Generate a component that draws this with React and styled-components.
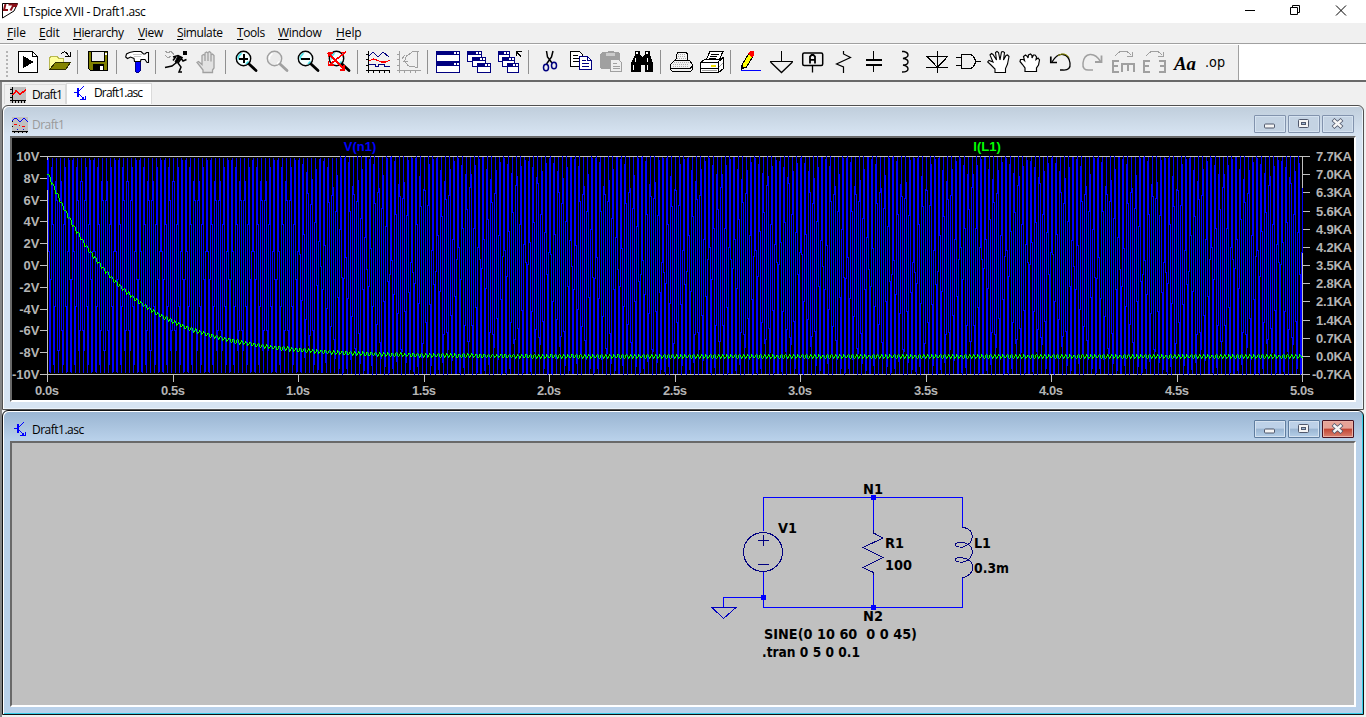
import React from "react";
import styled, { createGlobalStyle } from "styled-components";

const GlobalStyle = createGlobalStyle`
  * { box-sizing: border-box; }
  body { margin: 0; background: #f0f0f0; font-family: "Open Sans", sans-serif; overflow: hidden; }
`;

const Frame = styled.div`
  width: 1366px;
  height: 717px;
  display: flex;
  flex-direction: column;
  background: #f0f0f0;
`;
const TitleBar = styled.header`
  height: 23px;
  display: flex;
  align-items: center;
  background: #fff;
`;
const AppTitle = styled.span`
  flex: 1;
  margin-left: 3px;
  font-size: 12px;
  letter-spacing: -0.39px;
  line-height: 22px;
  white-space: pre;
`;
const Caption = styled.svg`
  width: 138px;
  height: 23px;
`;
const MenuBar = styled.nav`
  height: 20px;
  display: flex;
  padding-left: 7px;
  background: #f0f0f0;
`;
const MenuItem = styled.span`
  width: ${(p) => p.$w}px;
  font-size: 12px;
  letter-spacing: ${(p) => p.$ls ?? -0.4}px;
  line-height: 20px;
  white-space: nowrap;
  u { text-underline-offset: 2px; }
`;
const ToolStrip = styled.div`
  height: 39px;
  border-top: 1px solid #a0a0a0;
  border-bottom: 2px solid #696969;
  background: #fff;
  padding-top: 1px;
`;
const ToolBar = styled.div`
  width: 1239px;
  height: 35px;
  display: flex;
  align-items: flex-start;
  padding: 5px 0 0 6px;
  background: #f0f0f0;
  border-right: 1px solid #a0a0a0;
`;
const Grip = styled.i`
  width: 6px;
  height: 27px;
  background: radial-gradient(circle, #b4b4b4 1px, transparent 1.3px) -1px 0 / 4px 4px repeat-y;
`;
const ToolButton = styled.span`
  width: 31px;
  height: 26px;
  padding-left: 4px;
  flex: none;
  svg { display: block; width: 24px; height: 24px; overflow: visible; }
`;
const Separator = styled.i`
  width: 8px;
  height: 24px;
  flex: none;
  padding-left: 3px;
  &::before { content: ""; display: block; width: 1px; height: 24px; background: #909090; }
`;
const TabBar = styled.div`
  height: 23px;
  display: flex;
  align-items: flex-end;
  border-left: 2px solid #858585;
  padding-left: 2px;
`;
const Tab = styled.div`
  display: flex;
  align-items: center;
  gap: ${(p) => (p.$active ? 8 : 6)}px;
  height: ${(p) => (p.$active ? 21 : 20)}px;
  width: ${(p) => (p.$active ? 86 : 62)}px;
  margin-bottom: 1px;
  padding: 0 0 ${(p) => (p.$active ? 2 : 0)}px ${(p) => (p.$active ? 7 : 5)}px;
  border: 1px solid #dadada;
  border-bottom: 0;
  background: ${(p) => (p.$active ? "#fff" : "#f0f0f0")};
  font-size: 12px;
  letter-spacing: ${(p) => (p.$active ? -0.85 : -0.9)}px;
  line-height: 18px;
  svg { flex: none; }
`;
const Workspace = styled.main`
  width: 1366px;
  flex: 1;
  border-left: 2px solid #858585;
  background: #f0f0f0;
`;
const ChildWindow = styled.section`
  width: 1362px;
  height: ${(p) => p.$h}px;
  display: flex;
  flex-direction: column;
  padding: 0 7px 6px 7px;
  border: 1px solid ${(p) => (p.$active ? "#101010" : "#505050")};
  border-radius: 6px 6px 0 0;
  background: ${(p) =>
    p.$active
      ? "linear-gradient(#99b4d1, #b9d1ea 29px)"
      : "linear-gradient(#bfcddb, #d7e4f2 29px)"};
  box-shadow: inset 1px 1px 0 #fff, inset -1px -1px 0 ${(p) => (p.$active ? "#35cde8" : "#eaf2fa")};
`;
const ChildTitle = styled.div`
  height: 30px;
  flex: none;
  display: flex;
  align-items: center;
  padding: 7px 2px 0 2px;
  gap: 4px;
  font-size: 12px;
  line-height: 20px;
  letter-spacing: -0.5px;
  color: ${(p) => (p.$active ? "#000" : "#9a9a9a")};
  span { flex: 1; }
`;
const Buttons = styled.div`
  display: flex;
  gap: 2px;
  margin-top: -1px;
`;
const WinButton = styled.div`
  width: 32px;
  height: 18px;
  border: 1px solid ${(p) => (p.$danger ? "#4a1321" : p.$active ? "#5f7d9f" : "#8293ad")};
  border-radius: 1px;
  background: ${(p) =>
    p.$danger
      ? "linear-gradient(#e6a397 0 45%, #c24432 50%, #d9806f)"
      : p.$active
        ? "linear-gradient(#bdd1e8 0 45%, #9ab5d2 50%, #b5cfe8)"
        : "#c4d3e3"};
  box-shadow: inset 0 0 0 1px ${(p) => (p.$danger ? "#eab0a5" : "#d5e2f0")};
  svg { display: block; }
`;
const Client = styled.div`
  width: 1346px;
  height: ${(p) => p.$h}px;
  flex: none;
  border: 2px solid;
  border-color: #696969 #fff #fff #696969;
  background: ${(p) => p.$bg};
  svg { display: block; }
`;

/* ---------- toolbar icons, drawn on a 24 x 24 pixel grid ---------- */
const NAVY = "#000080";
const GREY = "#a0a0a0";
const K = "#000";

const Glass = ({ c = K, shine = "#40e0e8" }) => (
  <g shapeRendering="auto">
    <circle cx="9.5" cy="8.5" r="7.2" fill={c === K ? "#f4ffff" : "#ececec"} stroke={c} strokeWidth="1.4" />
    <path d="M4.500 9.500V6.500l3-3.300M12 14l2.500-2.500" stroke={shine} strokeWidth="1.600" fill="none" />
    <path d="M15 14l7 6.500" stroke={c} strokeWidth="2.8" strokeLinecap="round" />
  </g>
);
const Win = ({ x, y, w, h }) => (
  <>
    <path d={`M${x + 0.5} ${y + 0.5}h${w - 1}v${h - 1}h${1 - w}z`} fill="#fff" stroke={NAVY} />
    <path d={`M${x} ${y}h${w}v4h${-w}z`} fill={NAVY} />
    <path d={`M${x + w - 6} ${y + 1}h2v2h-2zM${x + w - 3} ${y + 1}h2v2h-2z`} fill="#fff" />
  </>
);

const icons = {
  run: (
    <>
      <path d="M2.500 1.500h14l5 5v16h-19z" fill="#fff" stroke={K} />
      <path d="M16.500 1.500v5h5" fill="none" stroke={K} />
      <path d="M7 6l11 6-11 6z" fill={K} />
    </>
  ),
  open: (
    <>
      <path d="M2.500 19V8l2-2h5l2 2h5v4" fill="#ffff9c" stroke="#b8b850" />
      <path d="M2.500 19.500l6-7h15l-5 7z" fill="#848400" stroke="#303000" />
      <path d="M14 4q4-5 7 1v1M18 6.500h5.500V2" fill="none" stroke={K} />
    </>
  ),
  save: (
    <>
      <path d="M2.500 1.500h19v19h-17l-2-2z" fill="#808000" stroke={K} />
      <path d="M5.500 1.500h13v10h-13z" fill="#efefef" stroke={K} />
      <path d="M7 14h11v7H7z" fill={K} />
      <path d="M14 16h3v4h-3z" fill="#fff" />
      <path d="M19 3h2v2h-2z" fill="#fff" />
    </>
  ),
  hammer: (
    <>
      <path d="M10 11h5v10l-1 1h-3l-1-1z" fill="#0000ff" stroke={NAVY} />
      <path
        d="M.7 7L1.500 4 4.500 2.500 9 1.500H16L18.500 4H20L21.500 2.500H23.500V12.500H22L20 9.500H16L15.500 11.500H9.500L9 8.500 5.500 7 2.500 8.500Z"
        fill="#fff" stroke={K} strokeWidth="1.100" shapeRendering="auto"
      />
      <path d="M8 4.500h9M9 6.500h7" stroke="#c8c8c8" />
    </>
  ),
  runner: (
    <>
      <path d="M18.500 1h4v4h-4z" fill={K} />
      <g shapeRendering="auto">
        <path d="M9 7l5-1.500 4 2-4 5.500 3 4-2 5h3M12.500 12.500L8 16l-7 1.500M12 6.500l-3 4M17 8l2 3 3.500-1.500" fill="none" stroke={K} strokeWidth="1.500" />
        <path d="M14 6l3 1-4 6-2-1z" fill={K} stroke={K} />
      </g>
      <path d="M1 1.500l3 1 3-1 3 3M1 5.500l3 2 3-1" stroke={GREY} fill="none" />
    </>
  ),
  halt: (
    <path
      d="M8 22.500V20L4.500 15.500 2 12.500 3.500 11.500 7 14.500V5.500L8.500 4.500 10 5.500V11 3L11.500 2 13 3V11 2.500L14.500 1.500 16 3V11.500 5L17.500 4 19 5.500V18L17.500 20V22.500Z"
      fill="#e2e2e2" stroke={GREY} strokeWidth="1.300" shapeRendering="auto"
    />
  ),
  zoomIn: (
    <>
      <Glass />
      <path d="M5 8.500h9M9.500 4v9" stroke={K} strokeWidth="2" />
    </>
  ),
  pan: <Glass c={GREY} shine="#fff" />,
  zoomOut: (
    <>
      <Glass />
      <path d="M5 8.500h9" stroke={K} strokeWidth="2" />
    </>
  ),
  zoomFit: (
    <>
      <Glass />
      <path d="M1 3l16 16M19 2L2 15M1.500 7V3H6M14 2.500h5M1.500 11v4h5M13 20h4v-5" stroke="#f00" strokeWidth="1.600" fill="none" />
    </>
  ),
  plot: (
    <>
      <path d="M2.500 1v22M0 20.500h24M0 4.500h2M0 9.500h2M0 15.500h2M7.500 20v3M13.500 20v3M18.500 20v3M23.500 20v3" stroke={K} fill="none" />
      <path d="M3 6l4-4 5 5 5-5 6 5" stroke={NAVY} fill="none" />
      <path d="M3 11l4-2 4 1 4 2h5l4-2" stroke="#f00" fill="none" strokeWidth="1.3" />
      <path d="M3 14.500h6v2h3v-2h6v2h6" stroke={NAVY} fill="none" />
    </>
  ),
  polar: (
    <>
      <path d="M2.500 1v22M0 20.500h24M0 4.500h2M0 9.500h2M0 15.500h2M7.500 20v3M13.500 20v3M18.500 20v3" stroke={GREY} fill="none" />
      <path d="M22 1.500h-6L9.500 6l-2 5 4 5 10 1.500M20.500 1v17M5 9l3-4M6 11.500h5" stroke={GREY} fill="none" />
    </>
  ),
  tile: (
    <>
      <Win x={0} y={1} w={24} h={11} />
      <Win x={0} y={12} w={24} h={11} />
    </>
  ),
  cascade: (
    <>
      <Win x={0} y={1} w={15} h={11} />
      <Win x={5} y={7} w={14} h={10} />
      <Win x={10} y={13} w={14} h={10} />
    </>
  ),
  cascadeUp: (
    <>
      <Win x={0} y={1} w={12} h={11} />
      <Win x={4} y={7} w={13} h={10} />
      <Win x={9} y={13} w={12} h={10} />
      <path d="M18.500 6V1.500H24M19 2l4 5" stroke={K} fill="none" strokeWidth="1.3" />
    </>
  ),
  cut: (
    <g shapeRendering="auto">
      <path d="M9.500 1l1 6 4.500 6M16 1l-1.500 6-5 7" stroke={K} strokeWidth="1.5" fill="none" />
      <ellipse cx="9" cy="17.500" rx="2.500" ry="3.300" stroke={NAVY} strokeWidth="1.500" fill="none" />
      <ellipse cx="17" cy="15.500" rx="2.500" ry="3.300" stroke={NAVY} strokeWidth="1.500" fill="none" />
    </g>
  ),
  copy: (
    <>
      <path d="M2.500 1.500h9l3 3v12h-12z" fill="#fff" stroke={K} />
      <path d="M5 5.500h5M5 8.500h6M5 11.500h6" stroke={K} />
      <path d="M11.500 6.500h8l4 4v9h-12z" fill="#fff" stroke={NAVY} />
      <path d="M19.500 6.500v4h4M14 10.500h4M14 13.500h7M14 16.500h7" stroke={NAVY} fill="none" />
    </>
  ),
  paste: (
    <>
      <path d="M1 4l2-2h5l1-1h5l1 1h5l1 2v15H2l-1-1z" fill={GREY} />
      <path d="M7 3h9v3H7z" fill="#ccc" />
      <path d="M11.500 9.500h8l3 3v9h-11z" fill="#eee" stroke={GREY} />
      <path d="M14 13.500h4M14 16.500h7M14 18.500h7" stroke={GREY} />
    </>
  ),
  find: (
    <>
      <path d="M5 1h5v3l2 3h1l2-3V1h5v4l3 8v9h-8v-7h-4v7H1v-9l4-8z" fill={K} />
      <path d="M6 2h2v2H6zM16 2h2v2h-2zM5 8h1v4H5zM17 8h1v4h-1zM3 15h1v5H3zM17 15h1v5h-1z" fill="#fff" />
    </>
  ),
  print: (
    <>
      <path d="M6.500 11l2-9h8l2 2v7" fill="#f5f5f5" stroke={K} />
      <path d="M1.500 14.500l4-4h15l3 4v5l-2 2h-18l-2-2z" fill="#f2f2f2" stroke={K} />
      <path d="M9 4.500h7M9 6.500h8M8 8.500h9M5 12.500h15M4 14.500h16M4 16.500h16" stroke="#b0b0b0" strokeDasharray="1 1" />
      <path d="M2 18.500h19l2-2" stroke={K} fill="none" />
    </>
  ),
  printSetup: (
    <>
      <path d="M6 10l4-8.500h13l-4 8.500" fill="#fff" stroke={K} />
      <path d="M11 4.500h8M10 6.500h7M9 8.500h7" stroke={K} />
      <path d="M.5 12.500l4-3h15l4-2v11l-5 4h-18z" fill="#fff" stroke={K} />
      <path d="M0 12.500h18.500v10M18 12l5-4M0 18.500h18" stroke={K} fill="none" />
      <path d="M11 15h5v1.500h-5z" fill="#f0e000" />
      <path d="M2 20.500h15M19 17l4-4" stroke={GREY} />
    </>
  ),
  pencil: (
    <>
      <path d="M2.500 19l1-5 6-10 4 3-6 10z" fill="#ff0" stroke={K} />
      <path d="M9 4l2-3h4v4l-2 2z" fill="#f00" />
      <path d="M2 20v-5l3 3z" fill={K} />
      <path d="M2 20.500h20" stroke="#00f" />
    </>
  ),
  ground: (
    <>
      <path d="M11.500 1v10M0 11.500h23" stroke={K} strokeWidth="1.200" />
      <path d="M.5 12l11 10.500 11-10.500" fill="none" stroke={K} strokeWidth="1.300" shapeRendering="auto" />
    </>
  ),
  label: (
    <g shapeRendering="auto">
      <rect x="1.700" y="3" width="20" height="12.500" rx="1.500" stroke={K} strokeWidth="1.500" />
      <path d="M9 13.500V6.500l1.500-1.500h2l1.500 1.500v7M9 9.800h5" stroke={K} strokeWidth="1.800" fill="none" />
      <path d="M11.500 16v6.500" stroke={K} strokeWidth="1.300" />
    </g>
  ),
  resistor: <path d="M11.500 1v3l7 3.500-14 6.500 7 3v6" fill="none" stroke={K} strokeWidth="1.200" shapeRendering="auto" />,
  capacitor: (
    <>
      <path d="M10.500 1v8M10.500 14v8" stroke={K} />
      <path d="M3 10h16M3 15h16" stroke={K} strokeWidth="2" />
    </>
  ),
  inductor: <path d="M8 1.500h2Q14 2.500 14 5T9 8.500Q14 9 14 12T9 15Q14 16 14 19T8 22" fill="none" stroke={K} strokeWidth="1.400" shapeRendering="auto" />,
  diode: <path d="M12.500 1v22M1 6.500h22M1 17.500h22M2.500 7l10 10.500 9.500-10.500" fill="none" stroke={K} strokeWidth="1.200" />,
  gate: <path d="M5.500 4.500h9q4 1 5 7-1 6-5 7h-9zM0 7.500h5M0 15.500h5M19.500 11.500h5" fill="none" stroke={K} strokeWidth="1.200" />,
  move: (
    <path
      d="M8 22.500V19L4 15 .7 12 2 10.500 6 12 3 5 4.500 3.500 6 4.500 9.500 10 8.500 2.500 10 1.500 11.500 2.500 13 10 14.500 2 16 1.500 17.500 2.500 16.500 10 19 5.500 20.500 5 22 6.500 20.500 14 18.500 18.500V22.500Z"
      fill="#fff" stroke={K} strokeWidth="1.100" shapeRendering="auto"
    />
  ),
  drag: (
    <path
      d="M7 21.500V18L4.500 14.500 2 11.500 2.500 9.500H5.500L6.500 10.500 5.500 6.500 7.500 5 9.500 6.500 10 8 10.500 5 12.500 4 14 5.500V8L15.500 5 17 5 18.500 7 18 9.500 20 8 21.500 10 20.500 15 18.500 18V21.500Z"
      fill="#fff" stroke={K} strokeWidth="1.200" shapeRendering="auto"
    />
  ),
  undo: (
    <g shapeRendering="auto">
      <path d="M3 12Q8 3.500 14 4.500T21 13 14 20H11" fill="none" stroke={K} strokeWidth="1.300" />
      <path d="M9 5.500q7-4 11 2" stroke="#909000" fill="none" />
      <path d="M1.800 6.500v6H8" stroke={K} strokeWidth="1.700" fill="none" />
    </g>
  ),
  redo: (
    <g shapeRendering="auto">
      <path d="M20.500 11.500Q16 4 10 4.500T3 13t7 7h3" fill="none" stroke={GREY} strokeWidth="1.500" />
      <path d="M21.500 5.500v6.500H15" stroke={GREY} strokeWidth="1.800" fill="none" />
    </g>
  ),
  rotate: (
    <>
      <path d="M4 6l5-4.500h7l4 3M16 6.500h5V2" stroke={GREY} fill="none" />
      <path d="M8 11H2v11h6M2 16h5M11 22v-8M10 14h14M17 14v7M23 14v8" stroke={GREY} strokeWidth="2" fill="none" />
    </>
  ),
  mirror: (
    <>
      <path d="M4 6l5-4.500h7l4 3M16 6.500h5V2" stroke={GREY} fill="none" />
      <path d="M8 11H2v11h6M2 16h5M17 11h6v11h-6M18 16h5" stroke={GREY} strokeWidth="2" fill="none" />
    </>
  ),
  text: (
    <text x="1" y="19.500" fontFamily="Liberation Serif, serif" fontSize="19" fontWeight="bold" fontStyle="italic" textLength="22" lengthAdjust="spacingAndGlyphs">Aa</text>
  ),
  op: (
    <text x="1" y="16.500" fontFamily="DejaVu Sans, sans-serif" fontSize="14.500" textLength="20" lengthAdjust="spacingAndGlyphs">.op</text>
  ),
};
const groups = [
  ["run", "open"],
  ["save"],
  ["hammer"],
  ["runner", "halt"],
  ["zoomIn", "pan", "zoomOut", "zoomFit"],
  ["plot", "polar"],
  ["tile", "cascade", "cascadeUp"],
  ["cut", "copy", "paste", "find"],
  ["print", "printSetup"],
  ["pencil", "ground", "label", "resistor", "capacitor", "inductor", "diode", "gate", "move", "drag", "undo", "redo", "rotate", "mirror", "text", "op"],
];
const lettered = new Set(["text", "op"]);

const PlotIcon = () => (
  <svg width="16" height="16" shapeRendering="crispEdges">
    <path d="M0 0h16v16H0z" fill="#c0c0c0" />
    <path d="M2.500 0v16M0 13.500h16M0 2.500h2M0 6.500h2M0 10.500h2M5.500 14v2M8.500 14v2M11.500 14v2M14.500 14v2" stroke={K} />
    <path d="M3 8l3-4 4 3 6-4" stroke="#f00" strokeWidth="1.600" fill="none" />
  </svg>
);
const TransistorIcon = () => (
  <svg width="12" height="17" shapeRendering="crispEdges">
    <path d="M0 7.500h4M10 1L5 6M5 9l6 6M6 14.500h5V11" stroke="#00f" fill="none" />
    <path d="M3 3h2v9H3zM8 12h2v2H8z" fill="#00f" />
  </svg>
);
const WaveIcon = () => (
  <svg width="16" height="16" shapeRendering="crispEdges">
    <path d="M0 0h16v16H0z" fill="#c0c0c0" />
    <path d="M0 4l2-2 2-1 4 4 4-4 4 4" stroke="#00f" fill="none" />
    <path d="M2 7.500h3M7 8.500h1M10 9.500h3" stroke="#f00" />
    <path d="M5 12h1v1H5zM11 12h1v1h-1z" fill="#00f" />
    <path d="M0 14.500h16M0 4.500h1M0 9.500h1M2 15.500h1M6 15.500h1M10 15.500h1M14 15.500h1" stroke={K} />
  </svg>
);

/* ---------- waveform plot ---------- */
const X0 = 35;
const PX_PER_S = 251;
const OY = 138;
const yVolt = (v) => 265 - OY - v * 10.88;
const yAmp = (a) => 356 - OY - a * 25.97;

// Joins samples pixel by pixel: each column keeps the vertical span the line crosses.
function columns(fn, stepOf) {
  const cols = new Map();
  const add = (x, a, b) => {
    const c = cols.get(x);
    const lo = Math.min(a, b);
    const hi = Math.max(a, b);
    if (c) {
      c[0] = Math.min(c[0], lo);
      c[1] = Math.max(c[1], hi);
    } else cols.set(x, [lo, hi]);
  };
  let t = 0;
  let px = X0;
  let py = Math.round(fn(0));
  while (t < 5) {
    t = Math.min(5, t + stepOf(t));
    const x = Math.round(X0 + t * PX_PER_S);
    const y = Math.round(fn(t));
    if (x === px) add(x, py, y);
    else {
      const m = Math.round((py + y) / 2);
      add(px, py, m);
      add(x, m, y);
    }
    px = x;
    py = y;
  }
  return [...cols].map(([x, [a, b]]) => `M${x} ${a}h1v${b - a + 1}h-1z`).join("");
}
const W = 2 * Math.PI * 60;
const voltPath = columns(
  (t) => yVolt((t < 1.16 ? 9.88 : 10) * Math.sin(W * (t + 0.006) + Math.PI / 4 - W * 0.006)),
  (t) => (t < 1 ? 1 / 1440 : 1 / 1423)
);

// The current is drawn as one thin pixel trace with a small ripple.
function trace(fn) {
  let d = "";
  let prev = Math.round(fn(0));
  for (let x = X0; x <= X0 + 5 * PX_PER_S; x++) {
    const y = Math.round(fn((x - X0) / PX_PER_S));
    const top = y > prev + 1 ? prev + 1 : y;
    const bottom = y < prev - 1 ? prev - 1 : y;
    d += `M${x} ${top}h1v${bottom - top + 1}h-1z`;
    prev = y;
  }
  return d;
}
const ampPath = trace((t) => yAmp(7.07 * Math.exp(-t / 0.3) + 0.075 * Math.sin(W * t - Math.PI / 4)));

const voltLabels = ["10V", "8V", "6V", "4V", "2V", "0V", "-2V", "-4V", "-6V", "-8V", "-10V"];
const ampLabels = ["7.7KA", "7.0KA", "6.3KA", "5.6KA", "4.9KA", "4.2KA", "3.5KA", "2.8KA", "2.1KA", "1.4KA", "0.7KA", "0.0KA", "-0.7KA"];
const timeLabels = ["0.0s", "0.5s", "1.0s", "1.5s", "2.0s", "2.5s", "3.0s", "3.5s", "4.0s", "4.5s", "5.0s"];

const AxisText = styled.text`
  font: bold 13px "Liberation Sans", sans-serif;
  fill: ${(p) => p.$c || "#b4b4b4"};
`;

const Plot = () => (
  <svg width="1342" height="262" shapeRendering="crispEdges">
    <path d="M28 18h1270v1H28zM28 236h1270v1H28zM35 18h1v226h-1zM1290 18h1v226h-1z" fill="#c0c0c0" />
    {voltLabels.map((l, i) => {
      const y = Math.round(18 + i * 21.8);
      return (
        <g key={l}>
          <path d={`M28 ${y}h7v1h-7z`} fill="#c0c0c0" />
          <AxisText x="27.500" y={y + 5} textAnchor="end">{l}</AxisText>
        </g>
      );
    })}
    {ampLabels.map((l, i) => {
      const y = Math.round(18 + i * 18.17);
      return (
        <g key={l}>
          <path d={`M1291 ${y}h7v1h-7z`} fill="#c0c0c0" />
          <AxisText x="1340" y={y + 5} textAnchor="end" textLength={l.length > 5 ? 40 : 36}>{l}</AxisText>
        </g>
      );
    })}
    {timeLabels.map((l, i) => {
      const x = Math.round(X0 + i * 125.5);
      return (
        <g key={l}>
          <path d={`M${x} 237h1v7h-1z`} fill="#c0c0c0" />
          <AxisText x={x} y="257" textAnchor="middle" textLength="24">{l}</AxisText>
        </g>
      );
    })}
    <path d={voltPath} fill="#00f" />
    <path d={ampPath} fill="#0f0" />
    <AxisText x="348" y="13" $c="#00f" textAnchor="middle">V(n1)</AxisText>
    <AxisText x="975" y="13" $c="#0f0" textAnchor="middle">I(L1)</AxisText>
  </svg>
);

/* ---------- schematic ---------- */
const Label = styled.text`
  font: bold 14px "DejaVu Sans Condensed", "DejaVu Sans", sans-serif;
  font-stretch: condensed;
  white-space: pre;
  fill: #000;
`;
const labels = [
  [863, 494, 20, "N1"], [863, 621, 20, "N2"], [778, 533, 19, "V1"], [885, 548, 19, "R1"],
  [885, 570, 27, "100"], [974, 548, 17, "L1"], [974, 573, 35, "0.3m"],
  [764, 639, 153, "SINE(0 10 60\u00a0 0 0 45)"], [762, 657, 98, ".tran 0 5 0 0.1"],
];
const Schematic = () => (
  <svg width="1342" height="262" viewBox="12 443 1342 262">
    <g fill="none" shapeRendering="crispEdges">
      <path d="M763.500 531V497.500H962.500V527M873.500 497V530M873.500 573V607M763.500 572V607.500H962.500V578M763.500 597.500H723.500V607" stroke="#0000ff" />
      <path d="M712 607.500h24l-12.500 11z" stroke="#0000c0" />
      <path d="M873.500 530V533l9.500 5-20 9.500 20 10-20 10 10.500 5v2M763.500 535v11M758 540.500h11M758 564.500h11" stroke={NAVY} />
      <circle cx="763" cy="552" r="19.500" stroke={NAVY} />
      <path d="M962.500 527C976 530 975 543 963 547C952 548 953 541 963 542.500C976 545 975 559 963 562C952 563 953 556 963 558C976 560 976 574 962.500 578" stroke={NAVY} />
    </g>
    <path d="M871 495h5v5h-5zM871 605h5v5h-5zM761 595h5v5h-5z" fill="#00f" />
    {labels.map(([x, y, w, s]) => (
      <Label key={s} x={x} y={y} textLength={w} lengthAdjust="spacingAndGlyphs">{s}</Label>
    ))}
  </svg>
);

const WindowButtons = ({ active }) => (
  <Buttons>
    <WinButton $active={active}>
      <svg width="30" height="16"><rect x="9.500" y="8" width="10" height="4" rx="1" fill="#f4f4f4" stroke="#50586c" /></svg>
    </WinButton>
    <WinButton $active={active}>
      <svg width="30" height="16">
        <rect x="9.500" y="3.500" width="10" height="8" rx="1" fill="#f4f4f4" stroke="#50586c" />
        <rect x="12.500" y="6.500" width="4" height="2" fill="#9cb5d1" stroke="#50586c" />
      </svg>
    </WinButton>
    <WinButton $active={active} $danger={active}>
      <svg width="30" height="16">
        <path d="M10 3.500l9 8M19 3.500l-9 8" stroke="#50586c" strokeWidth="4.200" />
        <path d="M10.500 4l8 7M18.500 4l-8 7" stroke="#f6f6f6" strokeWidth="2.400" />
      </svg>
    </WinButton>
  </Buttons>
);

const menus = [
  ["File", 32, 0], ["Edit", 34, -0.2], ["Hierarchy", 65, -0.4], ["View", 39, -0.3],
  ["Simulate", 60, -0.4], ["Tools", 41, -0.4], ["Window", 58, -0.3], ["Help", 30, -0.1],
];

export default function App() {
  return (
    <Frame>
      <GlobalStyle />
      <TitleBar>
        <svg width="20" height="23">
          <path d="M2.500 3.500v14.500L14 11 17.500 3.500z" fill="#fff" stroke={K} />
          <path d="M5.500 4L4 10h4M8.500 4.500h8l-.5 1.500h-3l-2.500 4.500" fill="none" stroke="#8b1018" strokeWidth="2" />
        </svg>
        <AppTitle>LTspice XVII - Draft1.asc</AppTitle>
        <Caption>
          <path d="M17 10.500h10" stroke={K} />
          <path d="M62.500 7.500h7v7h-7zM64.500 7V5.500h7v7H70" stroke={K} fill="none" />
          <path d="M108 5.500l10 10M118 5.500l-10 10" stroke={K} />
        </Caption>
      </TitleBar>
      <MenuBar>
        {menus.map(([m, w, ls]) => (
          <MenuItem key={m} $w={w} $ls={ls}><u>{m[0]}</u>{m.slice(1)}</MenuItem>
        ))}
      </MenuBar>
      <ToolStrip>
        <ToolBar>
          <Grip />
          {groups.map((g, i) => (
            <React.Fragment key={i}>
              {i > 0 && <Separator />}
              {g.map((n) => (
                <ToolButton key={n}>
                  <svg viewBox="0 0 24 24" fill={lettered.has(n) ? K : "none"} shapeRendering="crispEdges">
                    {icons[n]}
                  </svg>
                </ToolButton>
              ))}
            </React.Fragment>
          ))}
        </ToolBar>
      </ToolStrip>
      <TabBar>
        <Tab><PlotIcon />Draft1</Tab>
        <Tab $active><TransistorIcon />Draft1.asc</Tab>
      </TabBar>
      <Workspace>
        <ChildWindow $h={305}>
          <ChildTitle>
            <WaveIcon />
            <span>Draft1</span>
            <WindowButtons />
          </ChildTitle>
          <Client $h={266} $bg="#000"><Plot /></Client>
        </ChildWindow>
        <ChildWindow $h={305} $active>
          <ChildTitle $active>
            <svg width="16" height="17"><g transform="translate(2 0)"><TransistorIcon /></g></svg>
            <span>Draft1.asc</span>
            <WindowButtons active />
          </ChildTitle>
          <Client $h={266} $bg="#c0c0c0"><Schematic /></Client>
        </ChildWindow>
      </Workspace>
    </Frame>
  );
}
